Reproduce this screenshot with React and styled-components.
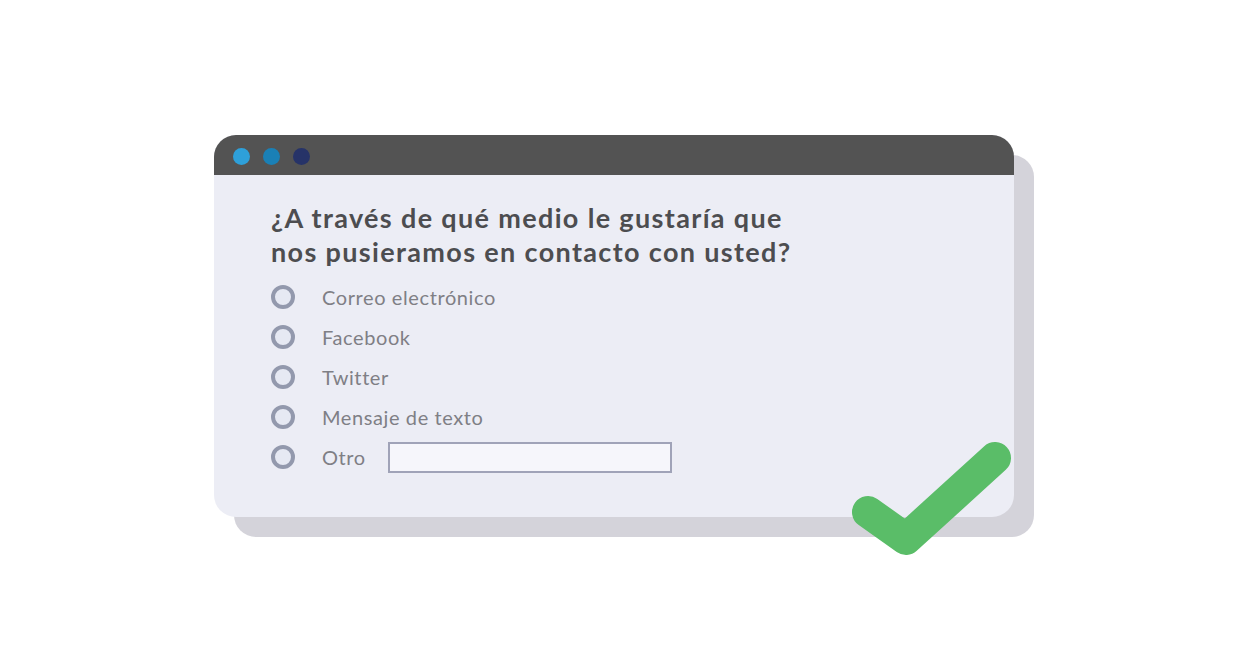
import React from 'react';
import styled, { createGlobalStyle } from 'styled-components';

const GlobalStyle = createGlobalStyle`
  body {
    margin: 0;
    background: #ffffff;
    font-family: Lato, "Open Sans", sans-serif;
  }
`;

const Page = styled.div`
  width: 1248px;
  height: 660px;
  padding: 135px 0 0 214px;
  box-sizing: border-box;
`;

const Window = styled.div`
  position: relative;
  width: 800px;
  height: 382px;
  border-radius: 22px;
  background: #ecedf5;
  box-shadow: 20px 20px 0 #d4d3da;
  display: flex;
  flex-direction: column;
`;

const TitleBar = styled.div`
  height: 40px;
  background: #535353;
  border-radius: 22px 22px 0 0;
  display: flex;
  align-items: center;
  gap: 13px;
  padding: 2px 0 0 19px;
  box-sizing: border-box;
`;

const Dot = styled.span`
  width: 17px;
  height: 17px;
  border-radius: 50%;
  background: ${p => p.color};
`;

const Body = styled.div`
  padding: 26px 0 0 57px;
`;

const Question = styled.h2`
  margin: 0 0 8px;
  font-size: 27px;
  line-height: 34px;
  font-weight: 700;
  color: #4d4d50;
  letter-spacing: 1.35px;
`;

const Options = styled.ul`
  list-style: none;
  margin: 0;
  padding: 0;
  display: flex;
  flex-direction: column;
`;

const Option = styled.li`
  height: 40px;
  display: flex;
  align-items: center;
`;

const Radio = styled.span`
  width: 16px;
  height: 16px;
  border-radius: 50%;
  border: 4px solid #9399ad;
  background: #e6e9f3;
  margin-right: 27px;
  flex: none;
`;

const Label = styled.span`
  font-size: 20px;
  color: #7f7f85;
  letter-spacing: 0.6px;
`;

const OtherInput = styled.span`
  width: 280px;
  height: 27px;
  margin-left: 22px;
  border: 2px solid #a0a3b8;
  background: #f6f6fb;
`;

const Check = styled.svg`
  position: absolute;
  left: 637px;
  top: 295px;
  overflow: visible;
`;

const options = ['Correo electrónico', 'Facebook', 'Twitter', 'Mensaje de texto'];

export default function App() {
  return (
    <Page>
      <GlobalStyle />
      <Window>
        <TitleBar>
          <Dot color="#2ea0da" />
          <Dot color="#1a80b6" />
          <Dot color="#263368" />
        </TitleBar>
        <Body>
          <Question>
            ¿A través de qué medio le gustaría que<br />
            nos pusieramos en contacto con usted?
          </Question>
          <Options>
            {options.map(o => (
              <Option key={o}>
                <Radio />
                <Label>{o}</Label>
              </Option>
            ))}
            <Option>
              <Radio />
              <Label>Otro</Label>
              <OtherInput />
            </Option>
          </Options>
        </Body>
        <Check width="180" height="130" viewBox="0 0 180 130">
          <polyline
            points="17,82 55,109 144,28"
            fill="none"
            stroke="#5abd68"
            strokeWidth="32"
            strokeLinecap="round"
            strokeLinejoin="round"
          />
        </Check>
      </Window>
    </Page>
  );
}
